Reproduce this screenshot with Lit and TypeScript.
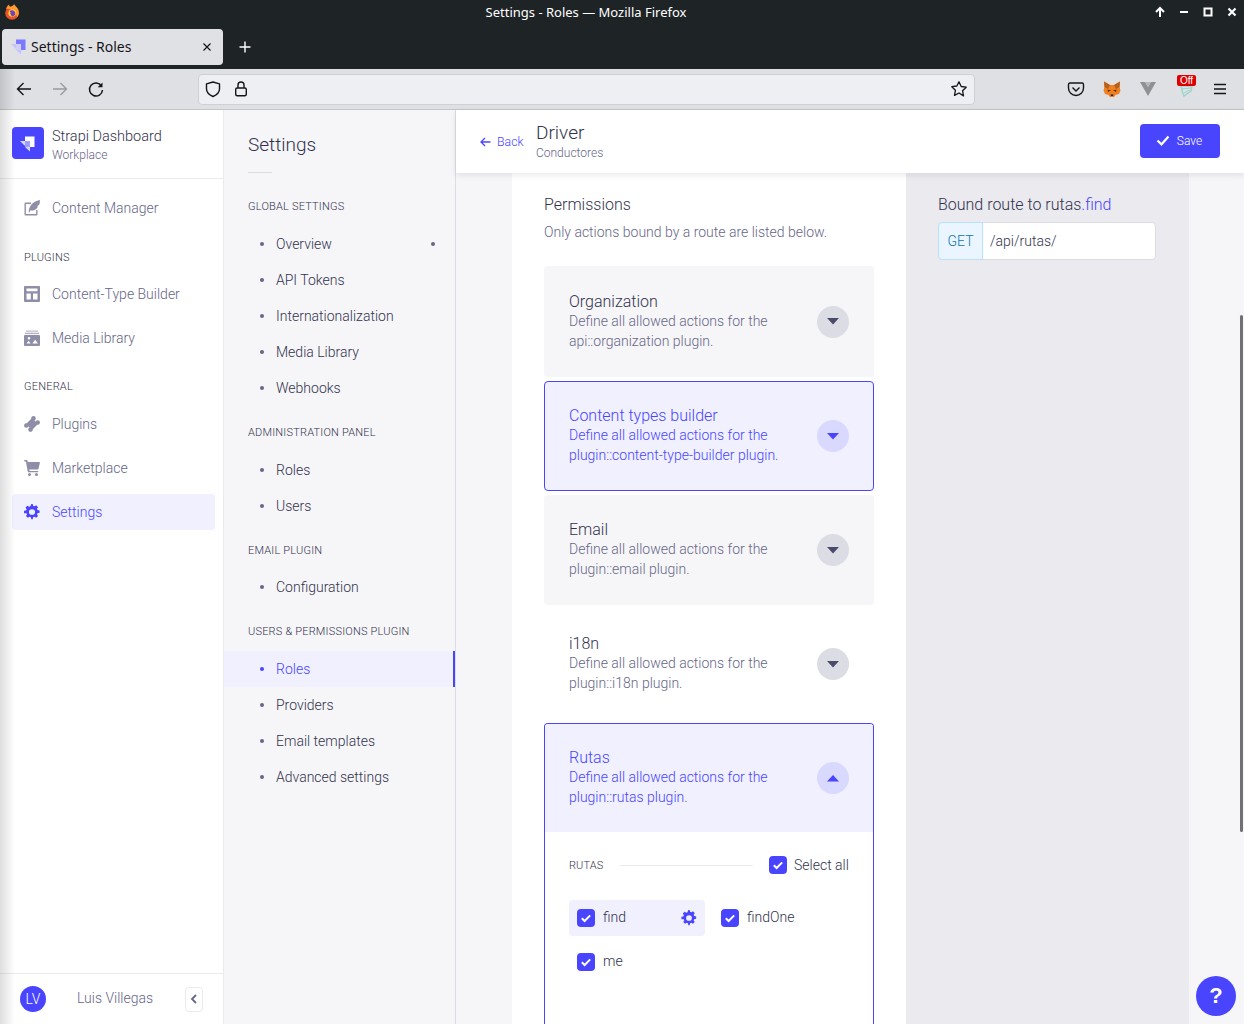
import {LitElement, html, css, svg} from 'lit';
import {customElement} from 'lit/decorators.js';

const strapiMark = (main: string, soft: string) => svg`
  <path d="M6 0.500h9.500V11h-4.500V5H6z" fill=${main}/>
  <path d="M1 5h5v4.500H5.500z" fill=${soft}/>
  <path d="M6 5h5v6H6z" fill=${soft} opacity=".6"/>
  <path d="M6 11h5v4.500z" fill=${soft}/>
`;

const gear = svg`<path fill-rule="evenodd" d="M9.200 0.500h1.600l.5 2.200 1.500.6 1.900-1.200 2.100 2.100-1.200 1.900.6 1.500 2.300.5v2.800l-2.300.5-.6 1.500 1.200 1.900-2.100 2.100-1.900-1.200-1.500.6-.5 2.200H9.200l-.5-2.200-1.500-.6-1.900 1.200-2.100-2.100 1.200-1.900-.6-1.500L1 11.400V8.600l2.300-.5.6-1.500-1.200-1.900 2.100-2.100 1.900 1.200 1.500-.6zM10 6.600a3.400 3.400 0 1 0 0 6.800 3.400 3.400 0 0 0 0-6.800z" fill="currentColor"/>`;

const check = html`<svg viewBox="0 0 18 18" width="18" height="18"><path d="M4.800 9.300l2.800 2.700 5.600-5.600" fill="none" stroke="#fff" stroke-width="2"/></svg>`;

type NavIcon = 'feather' | 'layout' | 'media' | 'puzzle' | 'cart' | 'gear';

const navIcons: Record<NavIcon, unknown> = {
  feather: svg`<path d="M7 2.500H1.700A1.200 1.200 0 0 0 .5 3.700v10.600A1.200 1.200 0 0 0 1.700 15.500h10.600a1.200 1.200 0 0 0 1.200-1.200V10h-1.400v4.100H1.900V3.900H7z" fill="currentColor"/><path d="M4.800 12.500C4.600 7 8 1.300 15.800 0c.4 3.500-.5 5.300-2.600 6 .7.500.6 1.200-.3 2.300-1.900 2.300-4.800 2.700-6.500 2l-1 2.200z" fill="currentColor"/>`,
  layout: svg`<path fill-rule="evenodd" d="M1 0h14a1 1 0 0 1 1 1v14a1 1 0 0 1-1 1H1a1 1 0 0 1-1-1V1a1 1 0 0 1 1-1zm1.500 2.500v2.800h11V2.500zm0 5v6h4.300v-6zm6.500 0v6h4.500v-6z" fill="currentColor"/>`,
  media: svg`<path d="M2 .5h12v1.400H2z" fill="currentColor" opacity=".5"/><path d="M1 2.700h14v1.400H1z" fill="currentColor" opacity=".7"/><path fill-rule="evenodd" d="M1 5h14a1 1 0 0 1 1 .9V15a1 1 0 0 1-1 1H1a1 1 0 0 1-1-1V6a1 1 0 0 1 1-1zm7.500 8.500H14l-2.800-3.800-1.800 2.300zm-1.900 0-1.900-2.700-2.200 2.700zM5 7a1.300 1.300 0 1 0 0 2.600A1.300 1.300 0 0 0 5 7z" fill="currentColor"/>`,
  puzzle: svg`<g fill="currentColor"><rect x="3.800" y="3.800" width="8.400" height="8.400" transform="rotate(45 8 8)"/><circle cx="9.500" cy="2.400" r="2.300"/><circle cx="13.700" cy="6.500" r="2.300"/><circle cx="6.500" cy="13.600" r="2.300"/><circle cx="2.300" cy="9.500" r="2.300"/></g>`,
  cart: svg`<path d="M.3 0h2.400c.4 0 .6.200.7.500l.4 1.500h11.500c.4 0 .7.400.6.800l-1.400 6c-.1.400-.4.700-.8.700H5.300l.3 1.400h8.600v1.400H4.500c-.3 0-.6-.2-.7-.5L1.900 1.400H.3z" fill="currentColor"/><circle cx="5.500" cy="14.500" r="1.500" fill="currentColor"/><circle cx="12.500" cy="14.500" r="1.500" fill="currentColor"/>`,
  gear: svg`<g transform="translate(-.9 -.4) scale(.89 .84)">${gear}</g>`,
};

const mainNav: {label?: string; items: {name: string; icon: NavIcon; active?: boolean}[]}[] = [
  {items: [{name: 'Content Manager', icon: 'feather'}]},
  {label: 'Plugins', items: [
    {name: 'Content-Type Builder', icon: 'layout'},
    {name: 'Media Library', icon: 'media'},
  ]},
  {label: 'General', items: [
    {name: 'Plugins', icon: 'puzzle'},
    {name: 'Marketplace', icon: 'cart'},
    {name: 'Settings', icon: 'gear', active: true},
  ]},
];

const settingsNav: {label: string; items: {name: string; active?: boolean; dot?: boolean}[]}[] = [
  {label: 'Global settings', items: [
    {name: 'Overview', dot: true},
    {name: 'API Tokens'},
    {name: 'Internationalization'},
    {name: 'Media Library'},
    {name: 'Webhooks'},
  ]},
  {label: 'Administration panel', items: [{name: 'Roles'}, {name: 'Users'}]},
  {label: 'Email plugin', items: [{name: 'Configuration'}]},
  {label: 'Users & Permissions plugin', items: [
    {name: 'Roles', active: true},
    {name: 'Providers'},
    {name: 'Email templates'},
    {name: 'Advanced settings'},
  ]},
];

const accordions = [
  {title: 'Organization', line1: 'Define all allowed actions for the', line2: 'api::organization plugin.', tone: 'grey first'},
  {title: 'Content types builder', line1: 'Define all allowed actions for the', line2: 'plugin::content-type-builder plugin.', tone: 'hot'},
  {title: 'Email', line1: 'Define all allowed actions for the', line2: 'plugin::email plugin.', tone: 'grey'},
  {title: 'i18n', line1: 'Define all allowed actions for the', line2: 'plugin::i18n plugin.', tone: 'plain'},
];

@customElement('app-root')
export class AppRoot extends LitElement {
  static styles = css`
    :host {
      display: block;
      position: relative;
      width: 1244px;
      height: 1024px;
      overflow: hidden;
      background: #f6f6f9;
      font-family: Roboto, sans-serif;
      font-weight: 300;
      font-size: 14px;
      color: #666687;
    }
    svg { display: block; flex: none; }

    /* browser chrome */
    .titlebar {
      height: 28px;
      background: #1e2326;
      color: #fff;
      display: flex;
      align-items: center;
      justify-content: center;
      padding-right: 72px;
      font: 400 13px "Noto Sans", sans-serif;
      position: relative;
      box-sizing: border-box;
      padding-bottom: 4px;
    }
    .ff { position: absolute; left: 5px; top: 4px; }
    .winctl { position: absolute; right: 6px; top: 6px; display: flex; gap: 12px; }
    .tabs {
      height: 41px;
      background: #1e2326;
      display: flex;
      align-items: flex-start;
      padding: 1px 0 0 2px;
      box-sizing: border-box;
    }
    .tab {
      width: 221px;
      height: 36px;
      background: #e0e1e5;
      border-radius: 4px;
      display: flex;
      align-items: center;
      padding: 0 9px 0 8px;
      box-sizing: border-box;
      color: #15141a;
      font: 400 14px "Noto Sans", sans-serif;
    }
    .tab span { flex: 1; margin: -2px 0 0 5px; }
    .newtab { margin: 10px 0 0 14px; }
    .toolbar {
      height: 41px;
      background: #dfe0e4;
      border-bottom: 1px solid #c4c5c9;
      box-sizing: border-box;
      display: flex;
      align-items: center;
      padding: 0 15px;
    }
    .navbtns { display: flex; gap: 18px; width: 183px; flex: none; }
    .urlbar {
      width: 777px;
      height: 31px;
      flex: none;
      background: #eeeff3;
      border: 1px solid #cfd0d4;
      border-radius: 4px;
      box-sizing: border-box;
      display: flex;
      align-items: center;
      padding: 0 6px;
      gap: 13px;
    }
    .urlbar .star { margin-left: auto; }
    .exts { display: flex; align-items: center; margin-left: 92px; gap: 18px; }
    .off { position: relative; width: 20px; height: 20px; margin-left: 2px; }
    .off b {
      position: absolute;
      left: 0;
      top: -4px;
      width: 19px;
      height: 11px;
      background: #d00;
      color: #fff;
      border-radius: 2px;
      font: 400 10px/11px "Liberation Sans", sans-serif;
      text-align: center;
    }

    .edgefade {
      position: absolute;
      left: 0;
      top: 69px;
      bottom: 0;
      width: 15px;
      background: linear-gradient(to right, rgba(0,0,0,.13), rgba(0,0,0,0));
      pointer-events: none;
    }

    .page { display: flex; height: 914px; }

    /* main nav */
    .mainnav {
      width: 224px;
      flex: none;
      background: #fff;
      border-right: 1px solid #eaeaef;
      box-sizing: border-box;
      display: flex;
      flex-direction: column;
    }
    .brand {
      height: 69px;
      border-bottom: 1px solid #eaeaef;
      box-sizing: border-box;
      display: flex;
      align-items: flex-start;
      padding: 17px 0 0 12px;
      gap: 8px;
    }
    .logo {
      width: 32px;
      height: 32px;
      border-radius: 4px;
      background: #4945ff;
      display: flex;
      align-items: center;
      justify-content: center;
    }
    .logo svg { margin: 2px 2px 0 0; }
    .brandtext { margin-top: 1px; }
    .brand strong { display: block; font-weight: 300; font-size: 14.5px; line-height: 18px; color: #32324d; }
    .brand small { display: block; font-size: 12px; line-height: 16px; margin-top: 1px; font-weight: 300; color: #666687; }
    .navbody { flex: 1; padding: 11px 8px 0 12px; }
    .navlabel {
      font-size: 11px;
      font-weight: 300;
      letter-spacing: .2px;
      text-transform: uppercase;
      color: #32324d;
      line-height: 16px;
      padding-left: 12px;
      margin: 24px 0 10px;
    }
    .navgroup + .navgroup + .navgroup .navlabel { margin: 23px 0 11px; }
    .navlink {
      height: 36px;
      display: flex;
      align-items: center;
      padding-left: 12px;
      gap: 12px;
      border-radius: 4px;
      margin-bottom: 8px;
      color: #666687;
    }
    .navlink svg { color: #8e8ea9; }
    .navlink.active { background: #f0f0ff; color: #4945ff; }
    .navlink.active svg { color: #4945ff; }
    .navfoot {
      height: 51px;
      border-top: 1px solid #eaeaef;
      box-sizing: border-box;
      display: flex;
      align-items: center;
      padding: 0 20px;
      flex: none;
    }
    .avatar {
      width: 26px;
      height: 26px;
      border-radius: 50%;
      background: #4945ff;
      color: #fff;
      font-size: 14px;
      display: flex;
      align-items: center;
      justify-content: center;
    }
    .navfoot .who { margin: -2px 0 0 31px; flex: 1; }
    .collapse {
      width: 18px;
      height: 25px;
      border: 1px solid #eaeaef;
      border-radius: 4px;
      box-sizing: border-box;
      display: flex;
      align-items: center;
      justify-content: center;
    }

    /* settings nav */
    .subnav {
      width: 232px;
      flex: none;
      background: #f6f6f9;
      border-right: 1px solid #dcdce4;
      box-sizing: border-box;
    }
    .subnav h2 {
      margin: 0 0 0 24px;
      padding-top: 23px;
      font-size: 19px;
      line-height: 24px;
      font-weight: 300;
      color: #32324d;
    }
    .subrule { width: 24px; height: 1px; background: #dcdce4; margin: 15px 0 0 24px; }
    .sublabel {
      font-size: 11px;
      font-weight: 300;
      letter-spacing: .2px;
      line-height: 16px;
      text-transform: uppercase;
      color: #32324d;
      margin: 26px 0 11px 24px;
    }
    .subgroup + .subgroup .sublabel { margin-top: 19px; }
    .subgroup:nth-child(5) .sublabel { margin-bottom: 10px; }
    .subitem {
      height: 36px;
      display: flex;
      align-items: center;
      padding-left: 52px;
      position: relative;
      color: #32324d;
    }
    .subitem::before {
      content: '';
      position: absolute;
      left: 36px;
      top: 16px;
      width: 4px;
      height: 4px;
      border-radius: 50%;
      background: #666687;
    }
    .subitem.active { background: #f0f0ff; color: #4945ff; border-right: 2px solid #4945ff; }
    .subitem.active::before { background: #4945ff; }
    .subitem .pip {
      position: absolute;
      right: 20px;
      top: 16px;
      width: 4px;
      height: 4px;
      border-radius: 50%;
      background: #666687;
    }

    /* main */
    .main { flex: 1; display: flex; flex-direction: column; min-width: 0; position: relative; }
    .head {
      height: 63px;
      background: #fff;
      box-shadow: 0 2px 6px rgba(33,33,52,.1);
      position: relative;
      z-index: 1;
      display: flex;
      align-items: center;
      padding: 0 24px;
      flex: none;
    }
    .back { display: flex; align-items: center; gap: 6px; color: #4945ff; font-size: 12.3px; width: 56px; margin-top: 1px; }
    .headtext h1 { margin: 0; font-size: 19px; line-height: 22px; font-weight: 300; color: #32324d; }
    .headtext p { margin: 1px 0 0; font-size: 12px; line-height: 16px; color: #666687; }
    .save {
      margin: -2px 0 0 auto;
      width: 80px;
      height: 34px;
      border-radius: 4px;
      background: #4945ff;
      color: #fff;
      font-size: 12px;
      display: flex;
      align-items: center;
      justify-content: center;
      gap: 7px;
      padding-right: 2px;
      box-sizing: border-box;
    }
    .body { flex: 1; display: flex; padding-left: 56px; min-height: 0; }
    .card { width: 394px; flex: none; background: #fff; padding: 22px 32px 0; box-sizing: border-box; }
    .card h3 { margin: 0; font-size: 16px; line-height: 20px; font-weight: 300; color: #32324d; }
    .card > p { margin: 7px 0 24px; font-size: 14px; line-height: 20px; color: #666687; }
    .acc {
      margin-bottom: 4px;
      border-radius: 4px;
      height: 110px;
      box-sizing: border-box;
      border: 1px solid transparent;
      display: flex;
      align-items: center;
      padding: 0 24px;
    }
    .acc.first { height: 111px; }
    .acc.grey { background: #f6f6f9; }
    .acc.hot { background: #f0f0ff; border-color: #4945ff; }
    .acc .txt { flex: 1; padding-bottom: 3px; }
    .acc.first .txt { padding-bottom: 1px; }
    .acc h4 { margin: 0; padding-top: 2px; font-size: 16px; line-height: 18px; font-weight: 300; color: #32324d; }
    .acc span { display: block; line-height: 20px; color: #666687; }
    .acc.hot h4, .acc.hot span { color: #4945ff; }
    .round {
      width: 32px;
      height: 32px;
      border-radius: 50%;
      background: #dcdce4;
      display: flex;
      align-items: center;
      justify-content: center;
      color: #4a4a6a;
      flex: none;
    }
    .hot .round { background: #d9d8ff; color: #4945ff; }
    .open {
      border: 1px solid #4945ff;
      border-bottom: 0;
      border-radius: 4px 4px 0 0;
      height: 400px;
      box-sizing: border-box;
    }
    .open .acc { border: 0; border-radius: 3px 3px 0 0; margin: 0; height: 108px; }
    .perm { padding: 24px 24px 0; }
    .permhead { display: flex; align-items: center; height: 18px; }
    .permhead small { font-size: 11px; letter-spacing: .1px; color: #32324d; text-transform: uppercase; width: 51px; flex: none; }
    .permhead i { width: 133px; height: 1px; background: #eaeaef; margin-right: 16px; flex: none; }
    .chk { width: 18px; height: 18px; border-radius: 4px; background: #4945ff; flex: none; }
    .permhead .chk { margin-right: 7px; }
    .permhead label { color: #32324d; white-space: nowrap; }
    .permgrid {
      display: grid;
      grid-template-columns: 136px 136px;
      grid-auto-rows: 36px;
      gap: 8px;
      margin-top: 26px;
    }
    .perm-item { display: flex; align-items: center; padding: 0 8px; gap: 8px; border-radius: 4px; color: #32324d; }
    .perm-item span { padding-bottom: 2px; }
    .perm-item.on { background: #f0f0ff; }
    .perm-item svg.cog { margin-left: auto; color: #4945ff; }
    .side { width: 283px; flex: none; background: #eaeaef; padding: 22px 32px; box-sizing: border-box; }
    .side h3 { margin: 0; font-size: 16px; line-height: 20px; font-weight: 300; color: #32324d; white-space: nowrap; }
    .side h3 em { font-style: normal; color: #4945ff; }
    .route {
      margin-top: 7px;
      width: 218px;
      height: 38px;
      display: flex;
      background: #fff;
      border: 1px solid #dcdce4;
      border-radius: 4px;
      box-sizing: border-box;
      align-items: center;
      color: #32324d;
    }
    .verb {
      width: 45px;
      margin: -1px 7px -1px -1px;
      height: 38px;
      background: #eaf5ff;
      border: 1px solid #b8e1ff;
      border-radius: 4px 0 0 4px;
      box-sizing: border-box;
      color: #0c75af;
      display: flex;
      align-items: center;
      justify-content: center;
    }
    .help {
      position: absolute;
      right: 8px;
      bottom: 8px;
      width: 40px;
      height: 40px;
      border-radius: 50%;
      background: #4945ff;
      color: #fff;
      font: 700 22px/40px "Liberation Sans", sans-serif;
      text-align: center;
      z-index: 2;
    }
    .scroll {
      position: absolute;
      right: 1px;
      top: 205px;
      width: 3px;
      height: 517px;
      border-radius: 2px;
      background: #717171;
      z-index: 2;
    }
  `;

  private renderBrowser() {
    return html`
      <div class="titlebar">
        <svg class="ff" width="14" height="16" viewBox="0 0 14 16">
          <circle cx="7" cy="9" r="6.800" fill="#e8532a"/>
          <path d="M1 5C2 2 3.500 1 4 .5c0 1 .5 2 1.500 2.500C7.500 2 9 1 9 0c1 2 3 3 4 5 1.500 3 1 6-1 8-1-5-5-9-11-8z" fill="#ff9a2e"/>
          <circle cx="7.200" cy="9" r="3.800" fill="#ffd23f"/>
          <path d="M4.500 7c1.500-1 4.500-1 5.500 1s0 4-2.500 4.500C6 11.500 5 10 5.500 8.500z" fill="#7b3fb8"/>
        </svg>
        Settings - Roles — Mozilla Firefox
        <div class="winctl">
          <svg width="12" height="12" viewBox="0 0 12 12"><path d="M6 11V2M2 6l4-4 4 4" fill="none" stroke="#fff" stroke-width="2"/></svg>
          <svg width="12" height="12" viewBox="0 0 12 12"><path d="M2 6h8" stroke="#fff" stroke-width="2"/></svg>
          <svg width="12" height="12" viewBox="0 0 12 12"><rect x="2.500" y="2.500" width="7" height="7" fill="none" stroke="#fff" stroke-width="2"/></svg>
          <svg width="12" height="12" viewBox="0 0 12 12"><path d="M2.500 2.500l7 7M9.500 2.500l-7 7" stroke="#fff" stroke-width="2.200"/></svg>
        </div>
      </div>
      <div class="tabs">
        <div class="tab">
          <svg width="16" height="16" viewBox="0 0 16 16">${strapiMark('#7b79ff', '#c5c3ff')}</svg>
          <span>Settings - Roles</span>
          <svg width="14" height="14" viewBox="0 0 14 14"><path d="M3.500 3.500l7 7M10.500 3.500l-7 7" stroke="#15141a" stroke-width="1.200"/></svg>
        </div>
        <svg class="newtab" width="16" height="16" viewBox="0 0 16 16"><path d="M8 2.500v11M2.500 8h11" stroke="#fff" stroke-width="1.400"/></svg>
      </div>
      <div class="toolbar">
        <div class="navbtns">
          <svg width="18" height="18" viewBox="0 0 18 18"><path d="M16 9H2.500M8.500 3L2.500 9l6 6" fill="none" stroke="#15141a" stroke-width="1.400"/></svg>
          <svg width="18" height="18" viewBox="0 0 18 18"><path d="M2 9h13.500M9.500 3l6 6-6 6" fill="none" stroke="#9a9ba0" stroke-width="1.400"/></svg>
          <svg width="18" height="18" viewBox="0 0 18 18"><path d="M14.500 6A6.500 6.500 0 1 0 15.500 10" fill="none" stroke="#15141a" stroke-width="1.500"/><path d="M15.500 2.500v4.800h-4.800z" fill="#15141a"/></svg>
        </div>
        <div class="urlbar">
          <svg width="16" height="18" viewBox="0 0 16 18"><path d="M8 2L1.500 3.800V9c0 3.500 3 6 6.500 7.500 3.500-1.500 6.500-4 6.500-7.500V3.800z" fill="none" stroke="#15141a" stroke-width="1.400" stroke-linejoin="round"/></svg>
          <svg width="14" height="18" viewBox="0 0 14 18"><path d="M4 8V5a3 3 0 0 1 6 0v3" fill="none" stroke="#15141a" stroke-width="1.400"/><rect x="1.700" y="8" width="10.600" height="7.800" rx="1.500" fill="none" stroke="#15141a" stroke-width="1.400"/></svg>
          <svg class="star" width="18" height="18" viewBox="0 0 18 18"><path d="M9 1.800l2.200 4.700 5 .7-3.600 3.600.9 5.100L9 13l-4.500 2.400.9-5.100-3.600-3.600 5-.7z" fill="none" stroke="#15141a" stroke-width="1.300" stroke-linejoin="round"/></svg>
        </div>
        <div class="exts">
          <svg width="18" height="18" viewBox="0 0 18 18"><path d="M3 3h12a1.500 1.500 0 0 1 1.500 1.500V8A7.500 7.500 0 0 1 1.500 8V4.500A1.500 1.500 0 0 1 3 3z" fill="none" stroke="#15141a" stroke-width="1.400"/><path d="M5.500 7.500L9 11l3.500-3.500" fill="none" stroke="#15141a" stroke-width="1.400"/></svg>
          <svg width="18" height="18" viewBox="0 0 18 18">
            <path d="M1 1.500l6 3.500h4l6-3.500-.5 5 1 4L16 14l-3.500 1L11 17H7l-1.500-2L2 14 .5 10.500l1-4z" fill="#f0801f"/>
            <path d="M1 1.500L7 5 5 9 1.500 7zM17 1.500L11 5l2 4 3.500-2z" fill="#b5601c"/>
            <path d="M4.500 9.500L8 10.500 5 12zM13.500 9.500L10 10.500 13 12z" fill="#5e3413"/>
            <path d="M7.500 14.500h3L10 16H8z" fill="#332017"/>
          </svg>
          <svg width="18" height="18" viewBox="0 0 18 18"><path d="M1 2h5l3 5 3-5h5L9 16z" fill="#8f9093"/><path d="M6 2h6L9 7z" fill="#b5b6b9"/></svg>
          <div class="off">
            <svg width="20" height="20" viewBox="0 0 20 20"><path d="M4 7l11 0-1 5-7 5-1.500-4z" fill="none" stroke="#9fd6cb" stroke-width="1.500"/><path d="M5 10l9-1M7 14l6-3" stroke="#9fd6cb"/></svg>
            <b>Off</b>
          </div>
          <svg width="18" height="18" viewBox="0 0 18 18" style="margin-left:-4px"><path d="M3 4.500h12M3 9h12M3 13.500h12" stroke="#15141a" stroke-width="1.400"/></svg>
        </div>
      </div>
    `;
  }

  private renderMainNav() {
    return html`
      <nav class="mainnav">
        <div class="brand">
          <div class="logo"><svg width="16" height="16" viewBox="0 0 16 16">${strapiMark('#fff', '#d9d8ff')}</svg></div>
          <div class="brandtext"><strong>Strapi Dashboard</strong><small>Workplace</small></div>
        </div>
        <div class="navbody">
          ${mainNav.map(g => html`
            <div class="navgroup">
              ${g.label ? html`<div class="navlabel">${g.label}</div>` : ''}
              ${g.items.map(i => html`
                <div class="navlink ${i.active ? 'active' : ''}">
                  <svg width="16" height="16" viewBox="0 0 16 16">${navIcons[i.icon]}</svg>
                  ${i.name}
                </div>`)}
            </div>`)}
        </div>
        <div class="navfoot">
          <div class="avatar">LV</div>
          <div class="who">Luis Villegas</div>
          <div class="collapse"><svg width="8" height="10" viewBox="0 0 8 10"><path d="M6 1L2 5l4 4" fill="none" stroke="#666687" stroke-width="1.800"/></svg></div>
        </div>
      </nav>
    `;
  }

  private renderSubNav() {
    return html`
      <aside class="subnav">
        <h2>Settings</h2>
        <div class="subrule"></div>
        ${settingsNav.map(g => html`
          <div class="subgroup">
            <div class="sublabel">${g.label}</div>
            ${g.items.map(i => html`
              <div class="subitem ${i.active ? 'active' : ''}">${i.name}${i.dot ? html`<span class="pip"></span>` : ''}</div>`)}
          </div>`)}
      </aside>
    `;
  }

  private renderMain() {
    return html`
      <main class="main">
        <header class="head">
          <div class="back">
            <svg width="11" height="10" viewBox="0 0 11 10"><path d="M10.500 5H1.500M5 1L1 5l4 4" fill="none" stroke="#4945ff" stroke-width="1.300"/></svg>
            Back
          </div>
          <div class="headtext"><h1>Driver</h1><p>Conductores</p></div>
          <div class="save">
            <svg width="14" height="11" viewBox="0 0 14 11"><path d="M1.500 5.500l4 3.800 7-7.800" fill="none" stroke="#fff" stroke-width="2.200"/></svg>
            Save
          </div>
        </header>
        <div class="body">
          <section class="card">
            <h3>Permissions</h3>
            <p>Only actions bound by a route are listed below.</p>
            ${accordions.map(a => html`
              <div class="acc ${a.tone}">
                <div class="txt"><h4>${a.title}</h4><span>${a.line1}</span><span>${a.line2}</span></div>
                <div class="round"><svg width="12" height="7" viewBox="0 0 12 7"><path d="M0 0h12L6 6.500z" fill="currentColor"/></svg></div>
              </div>`)}
            <div class="open">
              <div class="acc hot">
                <div class="txt"><h4>Rutas</h4><span>Define all allowed actions for the</span><span>plugin::rutas plugin.</span></div>
                <div class="round"><svg width="12" height="7" viewBox="0 0 12 7"><path d="M0 6.500h12L6 0z" fill="currentColor"/></svg></div>
              </div>
              <div class="perm">
                <div class="permhead">
                  <small>Rutas</small><i></i>
                  <div class="chk">${check}</div><label>Select all</label>
                </div>
                <div class="permgrid">
                  <div class="perm-item on">
                    <div class="chk">${check}</div><span>find</span>
                    <svg class="cog" width="16" height="16" viewBox="1 .5 18 19">${gear}</svg>
                  </div>
                  <div class="perm-item"><div class="chk">${check}</div><span>findOne</span></div>
                  <div class="perm-item"><div class="chk">${check}</div><span>me</span></div>
                </div>
              </div>
            </div>
          </section>
          <section class="side">
            <h3>Bound route to rutas<em>.find</em></h3>
            <div class="route"><div class="verb">GET</div>/api/rutas/</div>
          </section>
        </div>
        <div class="scroll"></div>
        <div class="help">?</div>
      </main>
    `;
  }

  render() {
    return html`
      ${this.renderBrowser()}
      <div class="page">
        ${this.renderMainNav()}
        ${this.renderSubNav()}
        ${this.renderMain()}
      </div>
      <div class="edgefade"></div>
    `;
  }
}
